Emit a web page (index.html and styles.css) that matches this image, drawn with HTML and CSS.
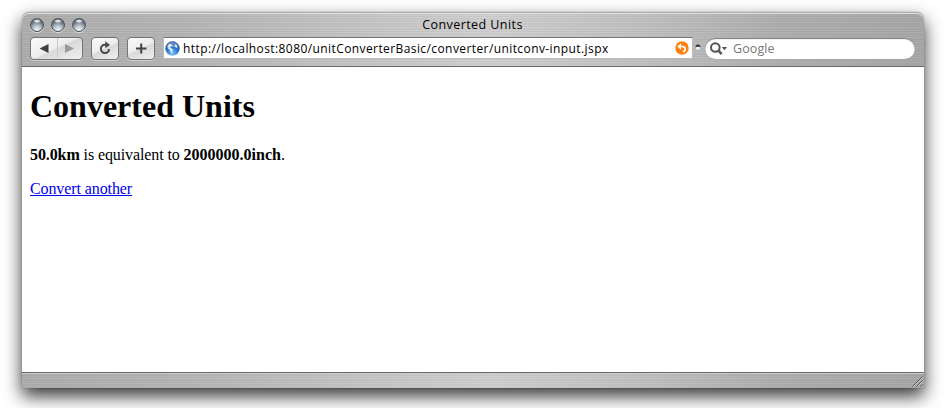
FILE: index.html
```html
<!DOCTYPE html>
<html lang="en">
<head>
<meta charset="utf-8">
<title>Converted Units</title>
<link rel="stylesheet" href="styles.css">
</head>
<body>
<div class="window">
  <header class="chrome metal">
    <div class="titlebar">
      <div class="lights"><i class="light"></i><i class="light"></i><i class="light"></i></div>
      <div class="title"><span class="title-text">Converted Units</span></div>
    </div>
    <div class="toolbar">
      <div class="button pair">
        <svg width="51" height="20" viewBox="0 0 51 20"><path d="M26.500 0V20" stroke="#c9c9c9"/><path d="M8.500 10.500L17.500 6v9z" fill="#404040"/><path d="M43 10.500L34 6v9z" fill="#999"/></svg>
      </div>
      <div class="button single">
        <svg width="26" height="20" viewBox="0 0 26 20"><path d="M14.500 6.800H13a4.100 4.100 0 1 0 4.100 4.300" fill="none" stroke="#484848" stroke-width="2"/><path d="M13.300 3.300L18 6.900l-4.700 3.400z" fill="#484848"/></svg>
      </div>
      <div class="button single">
        <svg width="26" height="20" viewBox="0 0 26 20"><path d="M8 10.500H18.400M13.200 5.400V15.600" stroke="#444" stroke-width="2"/></svg>
      </div>
      <div class="address">
        <svg class="globe" width="15" height="15" viewBox="0 0 15 15">
          <defs><radialGradient id="sea" cx=".5" cy=".85" r=".8"><stop offset="0" stop-color="#79c3ff"/><stop offset=".5" stop-color="#2d79cf"/><stop offset="1" stop-color="#174b94"/></radialGradient></defs>
          <circle cx="7.500" cy="7.500" r="7.200" fill="url(#sea)"/>
          <path d="M2.200 5.200L4.200 3l2.600.2.4 1.300-1.400.9-.5 1.300 1.800.8 1.100 1.400-.8 1.400-.4 2.400-1.500-1.900-.6-1.900-1.800-1.100zM10 3.200l1.900 1 .9 1.800-1.400.9-1.600-1.400z" fill="#e9f5ff" opacity=".85"/>
          <ellipse cx="7.500" cy="3.500" rx="5" ry="2.600" fill="#fff" opacity=".3"/>
        </svg>
        <span class="url">http://localhost:8080/unitConverterBasic/converter/unitconv-input.jspx</span>
        <svg class="snapback" width="14" height="14" viewBox="0 0 14 14"><circle cx="7" cy="7" r="6.700" fill="#ff7f0c"/><path d="M5 5.500H7.200Q10.300 5.700 10.300 8T7.800 10.700" fill="none" stroke="#fff" stroke-width="1.700"/><path d="M2.300 5.500L6 2.200v6.600z" fill="#fff"/></svg>
      </div>
      <svg class="divider" width="6" height="6" viewBox="0 0 6 6"><ellipse cx="3" cy="3.600" rx="2.500" ry="2.200" fill="#eee"/><path d="M.3 3.400Q.6.5 3 .5t2.700 2.900L3.800 2.800H2.200z" fill="#333"/></svg>
      <div class="search">
        <svg width="20" height="16" viewBox="0 0 20 16"><circle cx="6.300" cy="6.500" r="4.300" fill="none" stroke="#555" stroke-width="2"/><path d="M9.500 9.700l3.200 3.500" stroke="#555" stroke-width="2.500"/><path d="M12.700 6h5.400l-2.700 3.300z" fill="#555"/></svg>
        <span class="hint">Google</span>
      </div>
    </div>
  </header>
  <main class="page">
    <h1>Converted Units</h1>
    <p><b>50.0km</b> is equivalent to <b class="result">2000000.0inch</b>.</p>
    <p><a href="#">Convert another</a></p>
  </main>
  <footer class="status metal">
    <svg width="12" height="12" viewBox="0 0 12 12"><path d="M1.500 11.500l10-10M5.500 11.500l6-6M9.500 11.500l2-2" stroke="#555"/><path d="M2.500 11.500l9-9M6.500 11.500l5-5" stroke="#ddd" stroke-width=".6"/></svg>
  </footer>
</div>
</body>
</html>
```
FILE: styles.css
```css
* { box-sizing: border-box; }
html { height: 408px; overflow: hidden; background: #fff; }
body { margin: 0; padding: 12px 26px 20px 22px; height: 408px; overflow: hidden; }
svg { display: block; flex: none; }

.window {
  display: flex;
  flex-direction: column;
  width: 902px;
  height: 376px;
  border-radius: 7px 7px 0 0;
  background: #fff;
  box-shadow: 0 0 1px rgba(0,0,0,.55), 0 8px 18px rgba(0,0,0,.8);
}
.metal {
  background:
    repeating-linear-gradient(180deg, rgba(255,255,255,.08) 0 1px, rgba(0,0,0,.02) 1px 3px, rgba(255,255,255,.04) 3px 4px, rgba(0,0,0,.03) 4px 5px),
    linear-gradient(90deg, #acacac 0, #b4b4b4 18%, #c4c4c4 38%, #cecece 52%, #c0c0c0 68%, #adadad 84%, #a6a6a6 100%);
}
.chrome {
  height: 55px;
  border-bottom: 1px solid #696969;
  border-radius: 7px 7px 0 0;
  box-shadow: inset 0 1px #aaa, inset 0 2px #e4e4e4;
}
.titlebar { display: flex; height: 25px; padding: 6px 8px 0; }
.lights { display: flex; gap: 7px; width: 77px; }
.light {
  width: 14px;
  height: 14px;
  border: 1px solid #50555c;
  border-radius: 50%;
  background: radial-gradient(ellipse 4px 2px at 50% 17%, #fff 0, rgba(255,255,255,.5) 70%, transparent), radial-gradient(circle at 50% 88%, #f0f8fc 0, #b6c0ca 35%, #66707d 68%, #303742 100%);
  box-shadow: 0 1px rgba(255,255,255,.6);
}
.title { flex: 1; padding-right: 78px; text-align: center; }
.title-text { display: block; margin-top: -2px; font: 12.500px/18px "Open Sans", sans-serif; color: #000; letter-spacing: .43px; }
.toolbar { display: flex; align-items: center; height: 22px; padding-left: 8px; }
.button {
  height: 23px;
  border: 1px solid #747474;
  border-radius: 4px;
  background: linear-gradient(155deg, #fafafa 0, #ededed 48%, #d9d9d9 52%, #f0f0f0 100%);
  box-shadow: 0 1px rgba(255,255,255,.4);
}
.pair { width: 53px; }
.single { width: 28px; margin-left: 8px; }
.address {
  display: flex;
  align-items: center;
  width: 530px;
  height: 22px;
  margin-left: 8px;
  padding: 0 3px 0 1px;
  border: 1px solid #bbb;
  border-top-color: #777;
  background: #fff;
}
.url { flex: 1; margin-left: 3px; padding-top: 1px; font: 12px/18px "Open Sans", sans-serif; letter-spacing: .41px; white-space: nowrap; color: #000; }
.divider { margin: -2px 4px 0 2px; }
.search {
  display: flex;
  align-items: center;
  width: 210px;
  height: 21px;
  margin-top: 1px;
  padding-left: 4px;
  border-radius: 11px;
  background: #fff;
  box-shadow: inset 0 1px 1px #777, 0 0 1px #888;
}
.hint { margin-left: 4px; font: 12.500px/18px "Open Sans", sans-serif; letter-spacing: .1px; color: #777; }
.page { flex: 1; padding: 0 8px; font: 16px/18px "Liberation Serif", serif; color: #000; }
.page h1 { margin: 21px 0; font-size: 32px; line-height: 37px; font-weight: bold; }
.page p { margin: 0 0 16px; letter-spacing: -.1px; }
.page .result { letter-spacing: 0; }
.page a { color: #00e; }
.status { display: flex; justify-content: flex-end; height: 16px; padding: 2px 1px 0 0; border-top: 1px solid #696969; box-shadow: inset 0 1px #ccc; }
```
